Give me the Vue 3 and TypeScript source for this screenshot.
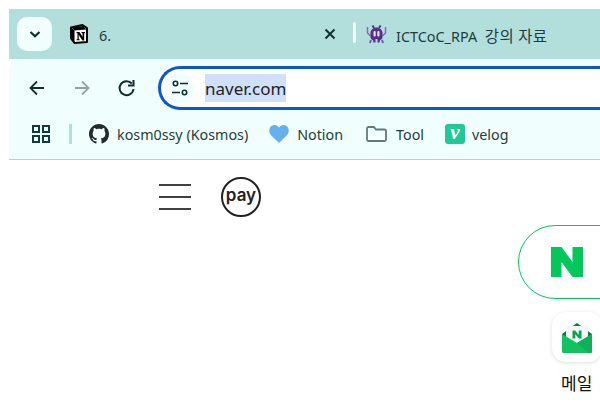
<script setup lang="ts">
const bookmarks = ['kosm0ssy (Kosmos)', 'Notion', 'Tool', 'velog']
</script>

<template>
  <div class="screen">
    <header class="chrome">
      <div class="tabstrip">
        <button class="tab-search" aria-label="탭 검색">
          <svg width="16" height="16" viewBox="0 0 16 16"><path d="M3.500 6 8 10.200 12.500 6" fill="none" stroke="#0f2e2c" stroke-width="2.200" /></svg>
        </button>
        <div class="tab tab-first">
          <svg class="favicon notion" width="20" height="20" viewBox="0 0 20 20">
            <path d="M2 3.500 13.500 1 18 4v14l-12.500 1L2 14.500Z" fill="#fff" stroke="#000" stroke-width="2" stroke-linejoin="round" />
            <path d="M2.500 3.500 5.500 6.500 17.500 5.500 14 2Z" fill="#000" />
            <path d="M2.500 4V14.500L5.500 18.500V6.500Z" fill="#000" />
            <path d="M7.500 8h3l3 4.700V9.300l-1-.4V8h3.500v.9l-.8.4V16.500h-1.800l-3.700-5.800v4.300l1 .4v.9H7.500v-.9l1-.4V9.200l-1-.3Z" fill="#000" />
          </svg>
          <span class="tab-title">6.</span>
          <svg class="close" width="12" height="12" viewBox="0 0 12 12"><path d="M1.500 1.500l9 9M10.500 1.500l-9 9" stroke="#0f2e2c" stroke-width="1.900" /></svg>
        </div>
        <span class="tab-sep"></span>
        <div class="tab tab-second">
          <svg class="favicon" width="21" height="21" viewBox="0 0 21 21">
            <path d="M1.500 3v6l3 3M19.500 3v6l-3 3" fill="none" stroke="#8a67b8" stroke-width="1.500" />
            <path d="M6.500 1.500 8 4M14.500 1.500 13 4" fill="none" stroke="#5b2d8e" stroke-width="2" />
            <path d="M5 16l-1 3M16 16l1 3" fill="none" stroke="#7a55a8" stroke-width="2" />
            <path d="M10.500 3.500c3.500 0 6 2.500 6 5.500v4c0 1.500-1 3-2.500 3l-.5 2.500h-2V15h-2v3.500h-2L7 16c-1.500 0-2.500-1.500-2.500-3V9c0-3 2.500-5.500 6-5.500Z" fill="#5b2d8e" />
            <rect x="7.500" y="7" width="2.200" height="5.500" rx="1" fill="#e8e2f1" />
            <rect x="11.300" y="7" width="2.200" height="5.500" rx="1" fill="#e8e2f1" />
          </svg>
          <span class="tab-title">ICTCoC_RPA <span class="ko">강의 자료</span></span>
        </div>
      </div>
      <div class="panel">
        <div class="toolbar">
          <svg class="nav" width="20" height="20" viewBox="0 0 20 20"><path d="M17 10H4M10 3.500 3.500 10l6.500 6.500" fill="none" stroke="#0f2e2c" stroke-width="1.800" /></svg>
          <svg class="nav" width="20" height="20" viewBox="0 0 20 20"><path d="M3 10h13M10 3.500 16.500 10 10 16.500" fill="none" stroke="#8fa5a3" stroke-width="1.800" /></svg>
          <svg class="nav" width="20" height="20" viewBox="0 0 20 20">
            <path d="M16.500 11a7 7 0 1 1-1.700-5.500" fill="none" stroke="#0f2e2c" stroke-width="2" />
            <path d="M16.500 2v5.500H11" fill="none" stroke="#0f2e2c" stroke-width="2" />
          </svg>
          <div class="omnibox">
            <span class="tune">
              <svg width="20" height="20" viewBox="0 0 20 20" fill="none" stroke="#0f2e2c" stroke-width="1.600">
                <circle cx="5.500" cy="5.500" r="2.200" /><path d="M10 5.500h8M2 14.500h8" /><circle cx="14.500" cy="14.500" r="2.200" />
              </svg>
            </span>
            <span class="url">naver.com</span>
          </div>
        </div>
        <div class="bookmarks">
          <svg class="apps" width="18" height="18" viewBox="0 0 18 18" fill="none" stroke="#0f3d3a" stroke-width="2">
            <rect x="1" y="1" width="6" height="6" /><rect x="11" y="1" width="6" height="6" /><rect x="1" y="11" width="6" height="6" /><rect x="11" y="11" width="6" height="6" />
          </svg>
          <span class="bm-sep"></span>
          <div class="bm bm-github">
            <svg width="20" height="20" viewBox="0 0 16 16"><path fill="#24292f" d="M8 0C3.580 0 0 3.580 0 8c0 3.540 2.290 6.530 5.470 7.590.4.070.55-.17.55-.38 0-.19-.01-.82-.01-1.490-2.010.37-2.530-.49-2.690-.94-.09-.23-.48-.94-.82-1.130-.28-.15-.68-.52-.01-.53.63-.01 1.080.58 1.230.82.720 1.210 1.870.87 2.330.66.070-.52.280-.87.510-1.070-1.780-.2-3.640-.89-3.640-3.950 0-.87.310-1.590.82-2.150-.08-.2-.36-1.020.08-2.120 0 0 .67-.21 2.200.82.640-.18 1.320-.27 2-.27s1.360.09 2 .27c1.530-1.040 2.200-.82 2.200-.82.44 1.100.16 1.920.08 2.120.51.560.82 1.270.82 2.150 0 3.070-1.870 3.750-3.650 3.950.29.250.54.730.54 1.480 0 1.070-.01 1.930-.01 2.200 0 .21.150.46.550.38A8.010 8.010 0 0 0 16 8c0-4.420-3.580-8-8-8Z" /></svg>
            <span>{{ bookmarks[0] }}</span>
          </div>
          <div class="bm bm-notion">
            <svg width="20" height="18" viewBox="0 0 20 18"><path fill="#64b1ee" d="M10 18 2 10.200C-1.200 6.800.2 0 5.400 0 7.600 0 9.200 1.300 10 2.800 10.800 1.300 12.400 0 14.600 0c5.200 0 6.600 6.800 3.400 10.200Z" /></svg>
            <span>{{ bookmarks[1] }}</span>
          </div>
          <div class="bm bm-tool">
            <svg width="21" height="16" viewBox="0 0 21 16"><path d="M1 2.500C1 1.700 1.700 1 2.500 1h5.500l2 2.500h8.500c.8 0 1.500.7 1.500 1.500v8.500c0 .8-.7 1.500-1.500 1.500h-16C1.700 15 1 14.300 1 13.500Z" fill="none" stroke="#617b7a" stroke-width="1.800" /></svg>
            <span>{{ bookmarks[2] }}</span>
          </div>
          <div class="bm bm-velog">
            <span class="velog-mark">v</span>
            <span>{{ bookmarks[3] }}</span>
          </div>
        </div>
      </div>
    </header>
    <main class="page">
      <div class="top-icons">
        <div class="burger"><i></i><i></i><i></i></div>
        <div class="pay">pay</div>
      </div>
      <div class="search-row">
        <div class="searchbox">
          <svg width="32" height="30" viewBox="0 0 32 30"><path fill="#03c75a" d="M0 0h10.500L21.500 15V0H32v30H21.500L10.500 15V30H0Z" /></svg>
        </div>
      </div>
      <div class="shortcut">
        <div class="tile">
          <svg width="32" height="32" viewBox="0 0 32 32">
            <path d="M16 2 1 13v8h30v-8Z" fill="#0a7d3f" />
            <rect x="5" y="5" width="22" height="18" fill="#f4f5f4" />
            <path d="M1 13 16 22 31 13v17.500a1.500 1.500 0 0 1-1.500 1.500h-27A1.500 1.500 0 0 1 1 30.500Z" fill="#10c35f" />
            <path d="M16 22 31 13v17.500a1.500 1.500 0 0 1-1.500 1.500H27Z" fill="#0cb257" />
            <path d="M11.500 9.500h2.600l3.600 4.200V9.500h2.800v8h-2.600l-3.600-4.200v4.200h-2.800Z" fill="#06a550" />
          </svg>
        </div>
        <span class="label">메일</span>
      </div>
    </main>
  </div>
</template>

<style scoped>
.screen {
  width: 600px;
  height: 406px;
  overflow: hidden;
  background: #fff;
  font-family: "Noto Sans", "Noto Sans CJK KR", sans-serif;
  color: #0f2e2c;
}
.chrome {
  padding: 9px 0 0 9px;
}
.tabstrip {
  height: 50px;
  background: #b2dfdb;
  display: flex;
  align-items: center;
  padding-left: 8px;
  font-size: 14.400px;
  color: #1f3d3b;
}
.tab-search {
  width: 35px;
  height: 34px;
  margin-top: -1px;
  padding: 0;
  border: 0;
  border-radius: 10px;
  background: #f0fffe;
  display: flex;
  align-items: center;
  justify-content: center;
}
.tab {
  display: flex;
  align-items: center;
}
.tab-first {
  width: 284px;
  padding-left: 17px;
  box-sizing: border-box;
}
.tab-title {
  padding-top: 3px;
}
.tab-first .tab-title {
  margin-left: 10px;
  flex: 1;
}
.notion {
  flex: none;
}
.close {
  flex: none;
}
.tab-sep {
  width: 3px;
  height: 21px;
  margin-left: 17px;
  margin-top: -4px;
  background: #f0fffe;
  border-radius: 2px;
}
.tab-second {
  margin-left: 10px;
}
.tab-second .tab-title {
  margin-left: 9px;
}
.ko {
  font-size: 15.500px;
  margin-left: 4px;
  letter-spacing: 0.300px;
}
.panel {
  background: #f0fffe;
  border-radius: 10px 0 0 0;
  border-bottom: 1px solid #bccfcf;
  height: 100px;
}
.toolbar {
  height: 58px;
  display: flex;
  align-items: center;
  padding-left: 18px;
}
.nav {
  flex: none;
  margin-right: 25px;
}
.toolbar .nav:nth-child(3) {
  margin-right: 21px;
}
.omnibox {
  flex: 1;
  height: 44px;
  box-sizing: border-box;
  border: 3px solid #0b57d0;
  border-right: 0;
  border-radius: 22px 0 0 22px;
  background: #fff;
  display: flex;
  align-items: center;
  padding-left: 4px;
}
.tune {
  width: 30px;
  height: 30px;
  border-radius: 50%;
  background: #f0fffe;
  display: flex;
  align-items: center;
  justify-content: center;
}
.url {
  margin-left: 10px;
  font-size: 17px;
  line-height: 28px;
  padding-top: 1px;
  height: 27px;
  background: #d0e0fb;
  color: #1f1f1f;
}
.bookmarks {
  height: 34px;
  display: flex;
  align-items: center;
  padding-left: 23px;
  font-size: 14.300px;
  color: #1f3d3b;
}
.apps {
  flex: none;
}
.bm-sep {
  width: 3px;
  height: 20px;
  margin-left: 19px;
  background: #b2dfdb;
}
.bm {
  display: flex;
  align-items: center;
  gap: 8px;
  white-space: nowrap;
}
.bm-github {
  margin-left: 17px;
}
.bm-notion {
  margin-left: 21px;
}
.bm-tool {
  margin-left: 23px;
  gap: 9px;
}
.bm-velog {
  margin-left: 21px;
  gap: 7px;
}
.velog-mark {
  width: 20px;
  height: 20px;
  border-radius: 3px;
  background: #20c997;
  color: #fff;
  font: italic bold 21px/17px "Liberation Serif", serif;
  text-align: center;
}
.page {
  padding-top: 16px;
}
.top-icons {
  display: flex;
  align-items: center;
  padding-left: 159px;
  height: 41px;
}
.burger {
  width: 32px;
  height: 26px;
  display: flex;
  flex-direction: column;
  justify-content: space-between;
}
.burger i {
  height: 2px;
  background: #404040;
}
.pay {
  width: 40px;
  height: 40px;
  box-sizing: border-box;
  margin-left: 30px;
  border: 2px solid #222;
  border-radius: 50%;
  font: 600 17px/33px "Inter", "Noto Sans", sans-serif;
  text-align: center;
  color: #222;
}
.search-row {
  margin: 8px 0 0 518px;
}
.searchbox {
  width: 160px;
  height: 74px;
  box-sizing: border-box;
  border: 1px solid #03c75a;
  border-radius: 37px;
  display: flex;
  align-items: center;
  padding-left: 32px;
}
.shortcut {
  margin: 13px 0 0 552px;
  width: 50px;
  display: flex;
  flex-direction: column;
  align-items: flex-start;
}
.tile {
  width: 50px;
  height: 50px;
  box-sizing: border-box;
  border-radius: 14px;
  background: #fff;
  box-shadow: 0 1px 4px rgba(0, 0, 0, 0.13);
  display: flex;
  align-items: center;
  justify-content: center;
}
.label {
  margin: 11px 0 0 9px;
  font-size: 17px;
  line-height: 22px;
  color: #111;
}
</style>
